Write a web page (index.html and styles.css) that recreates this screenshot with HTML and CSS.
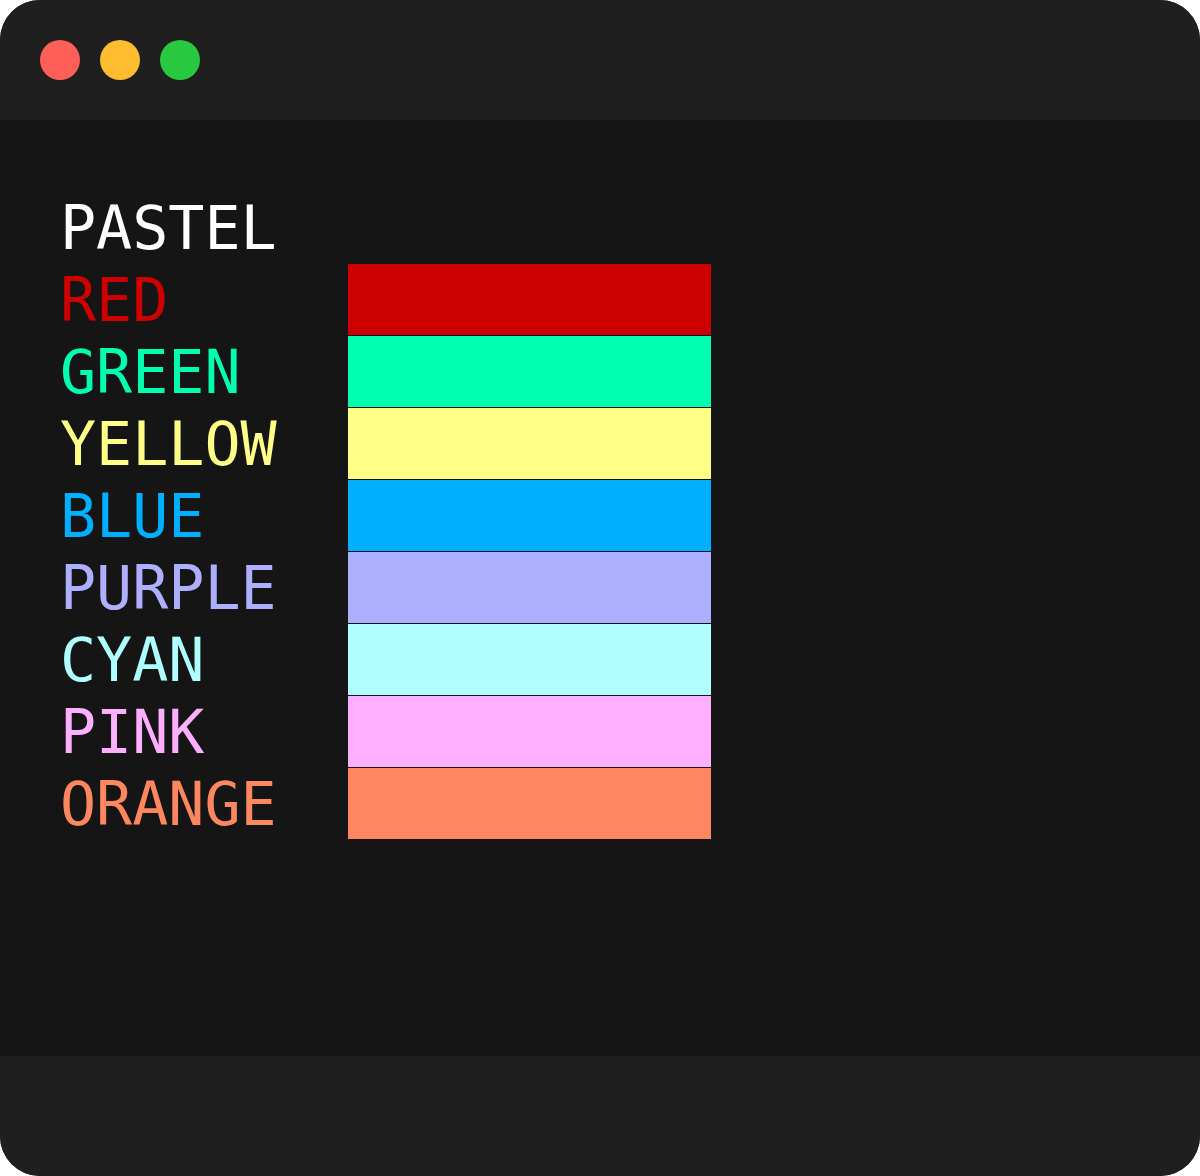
FILE: index.html
```html
<!DOCTYPE html>
<html>
<head>
<meta charset="utf-8">
<link rel="stylesheet" href="styles.css">
</head>
<body>
<div class="window">
  <div class="titlebar">
    <span class="dot dot-red"></span>
    <span class="dot dot-yellow"></span>
    <span class="dot dot-green"></span>
  </div>
  <div class="content">
    <div class="palette">
      <div class="label c-white">PASTEL</div><div></div>
      <div class="label c-red">RED</div><div class="swatch bg-red"></div>
      <div class="label c-green">GREEN</div><div class="swatch bg-green"></div>
      <div class="label c-yellow">YELLOW</div><div class="swatch bg-yellow"></div>
      <div class="label c-blue">BLUE</div><div class="swatch bg-blue"></div>
      <div class="label c-purple">PURPLE</div><div class="swatch bg-purple"></div>
      <div class="label c-cyan">CYAN</div><div class="swatch bg-cyan"></div>
      <div class="label c-pink">PINK</div><div class="swatch bg-pink"></div>
      <div class="label c-orange">ORANGE</div><div class="swatch bg-orange"></div>
    </div>
  </div>
  <div class="footer"></div>
</div>
</body>
</html>
```
FILE: styles.css
```css
html, body {
  margin: 0;
  padding: 0;
  background: #ffffff;
}
.window {
  width: 1200px;
  height: 1176px;
  border-radius: 40px;
  overflow: hidden;
  display: flex;
  flex-direction: column;
  background: #1f1f1f;
}
.titlebar {
  height: 120px;
  flex: none;
  display: flex;
  align-items: center;
  gap: 20px;
  padding-left: 40px;
  box-sizing: border-box;
  background: #1f1f1f;
}
.dot {
  width: 40px;
  height: 40px;
  border-radius: 50%;
  display: block;
}
.dot-red { background: #ff5f57; }
.dot-yellow { background: #febc2e; }
.dot-green { background: #28c840; }
.content {
  height: 936px;
  flex: none;
  background: #151515;
  padding: 72px 0 0 60px;
  box-sizing: border-box;
}
.footer {
  flex: 1;
  background: #1f1f1f;
}
.palette {
  display: grid;
  grid-template-columns: 288px 363px;
  grid-auto-rows: 72px;
}
.label {
  font-family: "DejaVu Sans Mono", monospace;
  font-size: 60px;
  line-height: 72px;
  white-space: nowrap;
}
.swatch {
  height: 71px;
}
.c-white { color: #ffffff; }
.c-red { color: #cc0000; }
.c-green { color: #00ffaf; }
.c-yellow { color: #ffff87; }
.c-blue { color: #00afff; }
.c-purple { color: #afafff; }
.c-cyan { color: #afffff; }
.c-pink { color: #ffafff; }
.c-orange { color: #ff875f; }
.bg-red { background: #cc0000; }
.bg-green { background: #00ffaf; }
.bg-yellow { background: #ffff87; }
.bg-blue { background: #00afff; }
.bg-purple { background: #afafff; }
.bg-cyan { background: #afffff; }
.bg-pink { background: #ffafff; }
.bg-orange { background: #ff875f; }
```
